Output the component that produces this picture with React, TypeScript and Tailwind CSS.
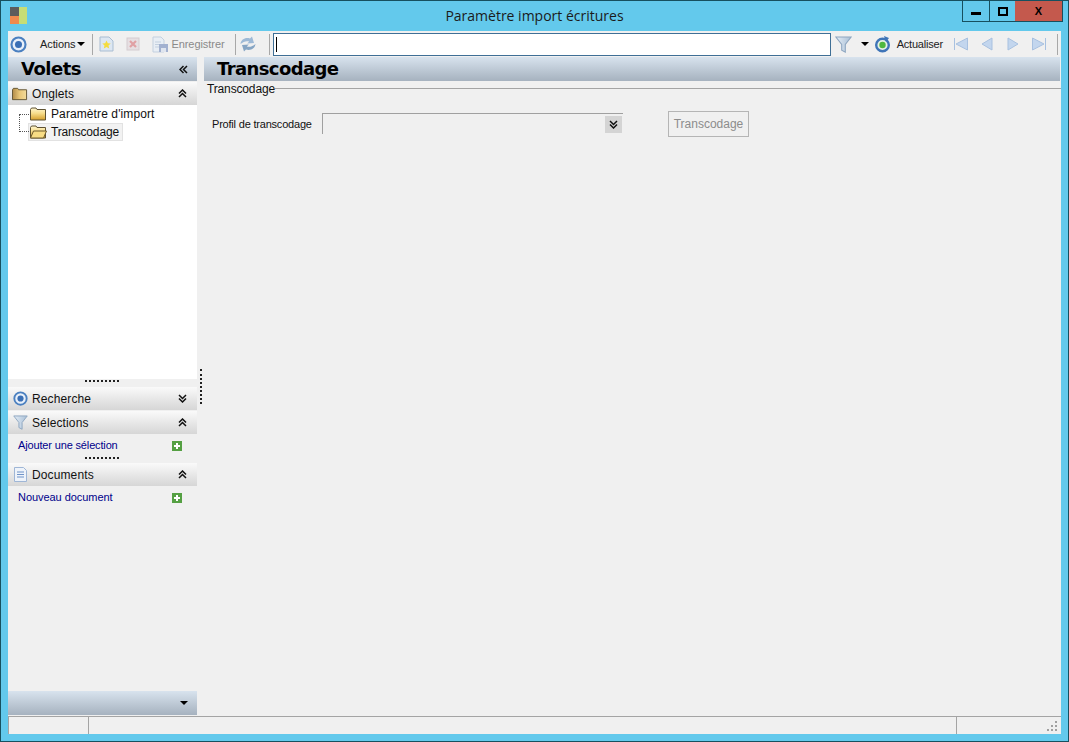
import React from "react";

const F = "[font-family:'Liberation_Sans',sans-serif]";

const Chevrons = ({ down = false, left = false }: { down?: boolean; left?: boolean }) => (
  <svg width="9" height="9" viewBox="0 0 9 9" fill="none" stroke="#111" strokeWidth="1.5" style={{ transform: left ? "rotate(-90deg)" : down ? "rotate(180deg)" : undefined }}>
    <path d="M1 4.5 4.5 1 8 4.5M1 8 4.5 4.5 8 8" />
  </svg>
);

const Target = ({ size = 16 }: { size?: number }) => (
  <svg width={size} height={size} viewBox="0 0 16 16">
    <circle cx="8" cy="8" r="6.6" fill="#e8f0fa" stroke="#4b80c0" strokeWidth="2" />
    <circle cx="8" cy="8" r="3.3" fill="#3a6fb5" />
  </svg>
);

const Funnel = ({ size = 16 }: { size?: number }) => (
  <svg width={size} height={size} viewBox="0 0 16 16">
    <defs>
      <linearGradient id="fn" x1="0" y1="0" x2="1" y2="0">
        <stop offset="0" stopColor="#e4edf6" />
        <stop offset="1" stopColor="#a9bfd6" />
      </linearGradient>
    </defs>
    <path d="M.8 1h14.4L9.7 8v7.2L6.3 13.4V8z" fill="url(#fn)" stroke="#8ea6c0" strokeWidth="1" />
  </svg>
);

const Folder = ({ open = false, solid = false }: { open?: boolean; solid?: boolean }) => (
  <svg width="17" height="14" viewBox="0 0 17 14">
    <defs>
      <linearGradient id="fg" x1="0" y1="0" x2="0" y2="1">
        <stop offset="0" stopColor="#fff6cf" />
        <stop offset="0.45" stopColor="#f6dc8a" />
        <stop offset="1" stopColor="#d59f2c" />
      </linearGradient>
      <linearGradient id="fs" x1="0" y1="0" x2="1" y2="0">
        <stop offset="0" stopColor="#b08a48" />
        <stop offset="0.5" stopColor="#e8c678" />
        <stop offset="1" stopColor="#f3dc9c" />
      </linearGradient>
    </defs>
    <path d="M.5 2.5 1.5 1H6l1 1.5h8.5v10.5H.5z" fill={solid ? "url(#fs)" : "url(#fg)"} stroke="#5f5232" />
    {open && <path d="M.5 13 3.5 6h13l-3 7z" fill="#f8dc84" stroke="#6f5a2c" />}
  </svg>
);

const Plus = () => (
  <svg width="10" height="10" viewBox="0 0 10 10">
    <rect width="10" height="10" fill="#55a043" />
    <path d="M5 2v6M2 5h6" stroke="#fff" strokeWidth="2" />
  </svg>
);

const Sep = () => <div className="w-px h-[21px] bg-[#a8a8a8] mx-[3px]" />;

const Nav = ({ d }: { d: string }) => (
  <svg width="16" height="14" viewBox="0 0 16 14" className="shrink-0">
    <path d={d} fill="#c3d6ee" stroke="#a8c1e0" strokeWidth="1" />
  </svg>
);

const Header = ({ icon, label, down = false }: { icon: React.ReactNode; label: string; down?: boolean }) => (
  <div className="h-[23px] flex items-center pl-[4px] pr-[10px] bg-gradient-to-b from-[#fafafa] to-[#d6d6d6]">
    <div className="w-[16px] flex justify-center">{icon}</div>
    <span className="ml-[4px] flex-1 text-[12px] text-[#111] tracking-[0.12px]">{label}</span>
    <Chevrons down={down} />
  </div>
);

const Dots = ({ className = "" }: { className?: string }) => (
  <div className={`flex justify-center ${className}`}>
    <div className="w-[35px] h-[2px] bg-[repeating-linear-gradient(90deg,#222_0,#222_2px,transparent_2px,transparent_4px)]" />
  </div>
);

export default function App() {
  return (
    <div className={`${F} w-[1069px] h-[742px] flex flex-col overflow-hidden bg-[#63c9ec] border border-[#17505f] text-[#111]`}>
      {/* Title bar */}
      <div className="h-[30px] shrink-0 flex items-start relative">
        <div className="absolute left-[9px] top-[6px] w-[17px] h-[17px] grid grid-cols-2 grid-rows-2">
          <div className="bg-[#5c5c5c]" />
          <div className="bg-[#c6dd75] row-span-2" />
          <div className="bg-[#ef8a4e]" />
        </div>
        <div className="flex-1 text-center text-[14px] leading-[30px] text-[#1b1b1b] [font-family:'Open_Sans',sans-serif]">Paramètre import écritures</div>
        <div className="absolute right-0 top-0 flex h-[21px] mr-[5px] border border-t-0 border-[#17505f]">
          <div className="w-[27px] flex items-center justify-center border-r border-[#17505f]"><div className="w-[10px] h-[3px] mt-[4px] bg-black" /></div>
          <div className="w-[25px] flex items-center justify-center"><div className="w-[10px] h-[9px] border-2 border-black" /></div>
          <div className="w-[47px] bg-[#c4594d] flex items-center justify-center text-[11px] font-bold text-black">X</div>
        </div>
      </div>

      {/* Body */}
      <div className="mx-[7px] flex-1 min-h-0 flex flex-col bg-[#f0f0f0]">
        {/* Toolbar */}
        <div className="h-[26px] shrink-0 flex items-center pl-[2px] text-[11px] text-[#222]">
          <Target size={17} />
          <span className="ml-[13px] tracking-[-0.1px]">Actions</span>
          <div className="ml-[2px] w-0 h-0 border-x-[4px] border-x-transparent border-t-[4px] border-t-black mr-[4px]" />
          <Sep />
          <svg width="15" height="16" viewBox="0 0 15 16" className="ml-[3px]">
            <path d="M1 1h9l4 4v10H1z" fill="#dde7f2" stroke="#a9bdd2" />
            <path d="M7.5 4.5l1.3 2.8 2.9.3-2.2 1.9.7 2.9-2.7-1.5-2.7 1.5.7-2.9-2.2-1.9 2.9-.3z" fill="#f5dc3e" />
          </svg>
          <svg width="14" height="14" viewBox="0 0 14 14" className="ml-[12px]">
            <rect x="1" y="1" width="12" height="12" fill="#e6dfe2" stroke="#d4ccd0" />
            <path d="M4 4l6 6M10 4l-6 6" stroke="#e0a0a4" strokeWidth="2.2" />
          </svg>
          <svg width="17" height="17" viewBox="0 0 17 17" className="ml-[12px]">
            <path d="M1 1h8l3 3v12H1z" fill="#e8eef5" stroke="#c3d0df" />
            <path d="M3 6h6M3 8.5h4M3 11h4" stroke="#c3d0df" />
            <rect x="7" y="8" width="9" height="8" fill="#a2b1d0" />
            <rect x="9" y="12" width="5" height="4" fill="#dfe5ef" />
          </svg>
          <span className="ml-[2px] text-[#8a8a8a] tracking-[-0.05px]">Enregistrer</span>
          <div className="ml-[7px]"><Sep /></div>
          <svg width="18" height="18" viewBox="0 0 18 18">
            <path d="M1.5 9C2 4.5 6.5 2 11 3.6L13 1.5l2 6.5-6.8.6 2-2C7.5 5.5 4.5 6.5 1.5 9z" fill="#9db9d6" />
            <path d="M16.5 9c-.5 4.5-5 7-9.500 5.400L5 16.500 3 10l6.800-.6-2 2c2.700 1.100 5.700.1 8.700-2.400z" fill="#86a5c4" />
          </svg>
          <div className="ml-[9px]"><Sep /></div>
          <div className="w-[558px] h-[23px] bg-white border border-[#3f6f96] flex items-center pl-[2px]">
            <div className="w-px h-[15px] bg-black" />
          </div>
          <div className="ml-[4px]"><Funnel size={17} /></div>
          <div className="ml-[9px] w-0 h-0 border-x-[4px] border-x-transparent border-t-[4px] border-t-black" />
          <svg width="17" height="17" viewBox="0 0 17 17" className="ml-[5px]">
            <circle cx="8.5" cy="9" r="6.3" fill="#e6f2e4" stroke="#3f75b8" strokeWidth="2.4" />
            <circle cx="8.5" cy="9" r="3.2" fill="#4fb83f" />
            <path d="M10 0l5 2-3 4z" fill="#3f75b8" />
          </svg>
          <span className="ml-[6px] tracking-[-0.2px]">Actualiser</span>
          <div className="ml-[10px] flex gap-[3px] items-center">
            <Nav d="M1.5 1v12M14.5 1v12L3 7z" />
            <div className="w-[4px]" />
            <Nav d="M13 1v12L3 7z" />
            <div className="w-[4px]" />
            <Nav d="M3 1v12l10-6z" />
            <div className="w-[4px]" />
            <Nav d="M14.5 1v12M1.5 1v12L13 7z" />
          </div>
          <div className="ml-[7px]"><Sep /></div>
        </div>

        {/* Main */}
        <div className="flex-1 min-h-0 flex">
          {/* Left */}
          <div className="w-[189px] shrink-0 flex flex-col">
            <div className="h-[24px] shrink-0 flex items-center pl-[13px] pr-[9px] bg-gradient-to-b from-[#d8e3ee] to-[#a6b2bf]">
              <span className="flex-1 text-[18px] font-bold text-black [font-family:'DejaVu_Sans',sans-serif] leading-none tracking-[-0.5px]">Volets</span>
              <Chevrons left />
            </div>
            <div className="h-px shrink-0" />
            <Header icon={<Folder solid />} label="Onglets" />
            <div className="h-[274px] shrink-0 bg-white relative text-[12px]">
              <div className="absolute left-[11px] top-[9px] w-[10px] h-[18px] border-l border-b border-dotted border-[#555]" />
              <div className="absolute left-[11px] top-[9px] w-[10px] border-t border-dotted border-[#555]" />
              <div className="pl-[22px] flex items-center h-[18px]">
                <Folder />
                <span className="ml-[4px] tracking-[0.1px]">Paramètre d'import</span>
              </div>
              <div className="pl-[20px] flex items-center h-[18px]">
                <div className="flex items-center h-[18px] pl-[1px] pr-[3px] bg-[#f2f2f2] border border-[#e2e2e2]">
                  <Folder open />
                  <span className="ml-[4px] tracking-[-0.15px]">Transcodage</span>
                </div>
              </div>
            </div>
            <Dots className="h-[8px] items-start pt-[1px] shrink-0" />
            <Header icon={<Target size={15} />} label="Recherche" down />
            <div className="h-px shrink-0" />
            <Header icon={<Funnel size={15} />} label="Sélections" />
            <div className="h-[23px] shrink-0 flex items-center pl-[10px] pr-[15px] text-[11px] text-[#00008b]">
              <span className="flex-1 tracking-[-0.15px]">Ajouter une sélection</span>
              <Plus />
            </div>
            <Dots className="h-[6px] items-start shrink-0" />
            <Header
              icon={
                <svg width="13" height="15" viewBox="0 0 13 15">
                  <path d="M.5.5h9l3 3v11H.5z" fill="#eef3fa" stroke="#9fb6d6" />
                  <path d="M3 5h7M3 7.500h7M3 10h7" stroke="#6f93c8" />
                </svg>
              }
              label="Documents"
            />
            <div className="h-[23px] shrink-0 flex items-center pl-[10px] pr-[15px] text-[11px] text-[#00008b]">
              <span className="flex-1 tracking-[-0.05px]">Nouveau document</span>
              <Plus />
            </div>
            <div className="flex-1" />
            <div className="h-[24px] shrink-0 flex items-center justify-end pr-[9px] bg-gradient-to-b from-[#d8e3ee] to-[#a6b2bf]">
              <div className="w-0 h-0 border-x-[4px] border-x-transparent border-t-[4px] border-t-black" />
            </div>
          </div>

          {/* Splitter */}
          <div className="w-[7px] shrink-0 relative">
            <div className="absolute left-[3px] top-[312px] h-[35px] border-l-2 border-dotted border-[#222]" />
          </div>

          {/* Right */}
          <div className="flex-1 min-w-0 flex flex-col">
            <div className="h-[24px] shrink-0 mr-[1px] flex items-center pl-[13px] bg-gradient-to-b from-[#d8e3ee] to-[#a6b2bf]">
              <span className="text-[18px] font-bold text-black [font-family:'DejaVu_Sans',sans-serif] leading-none tracking-[-0.6px]">Transcodage</span>
            </div>
            <div className="h-[17px] shrink-0 flex items-center">
              <span className="ml-[3px] mb-[2px] text-[12px] leading-none tracking-[-0.15px]">Transcodage</span>
              <div className="flex-1 h-px mb-[2px] bg-[#a4a4a4]" />
            </div>
            <div className="mt-[12px] flex items-center h-[28px] pl-[8px] text-[11px]">
              <span className="w-[110px] tracking-[-0.2px]">Profil de transcodage</span>
              <div className="w-[301px] h-[21px] -mt-[1px] border-t border-l border-[#a0a0a0] border-b-white flex items-center justify-end pr-[1px]">
                <div className="w-[17px] h-[17px] bg-[#d4d4d4] flex items-center justify-center"><Chevrons down /></div>
              </div>
              <div className="ml-[45px] w-[81px] h-[26px] border border-[#b5b5b5] flex items-center justify-center text-[#8c8c8c] text-[12px]">Transcodage</div>
            </div>
          </div>
        </div>

        {/* Status */}
        <div className="h-[18px] shrink-0 border-t border-[#a4a4a4] flex mt-[1px] relative">
          <div className="w-[81px] border-r border-l border-[#a4a4a4]" />
          <div className="w-[868px] border-r border-[#a4a4a4]" />
          <svg width="12" height="11" viewBox="0 0 12 11" className="absolute right-[3px] bottom-[2px]">
            <g fill="#a0a0a0">
              <rect x="9" y="0" width="2" height="2" /><rect x="5" y="4" width="2" height="2" /><rect x="9" y="4" width="2" height="2" />
              <rect x="1" y="8" width="2" height="2" /><rect x="5" y="8" width="2" height="2" /><rect x="9" y="8" width="2" height="2" />
            </g>
          </svg>
        </div>
      </div>
      <div className="h-[7px] shrink-0" />
    </div>
  );
}
